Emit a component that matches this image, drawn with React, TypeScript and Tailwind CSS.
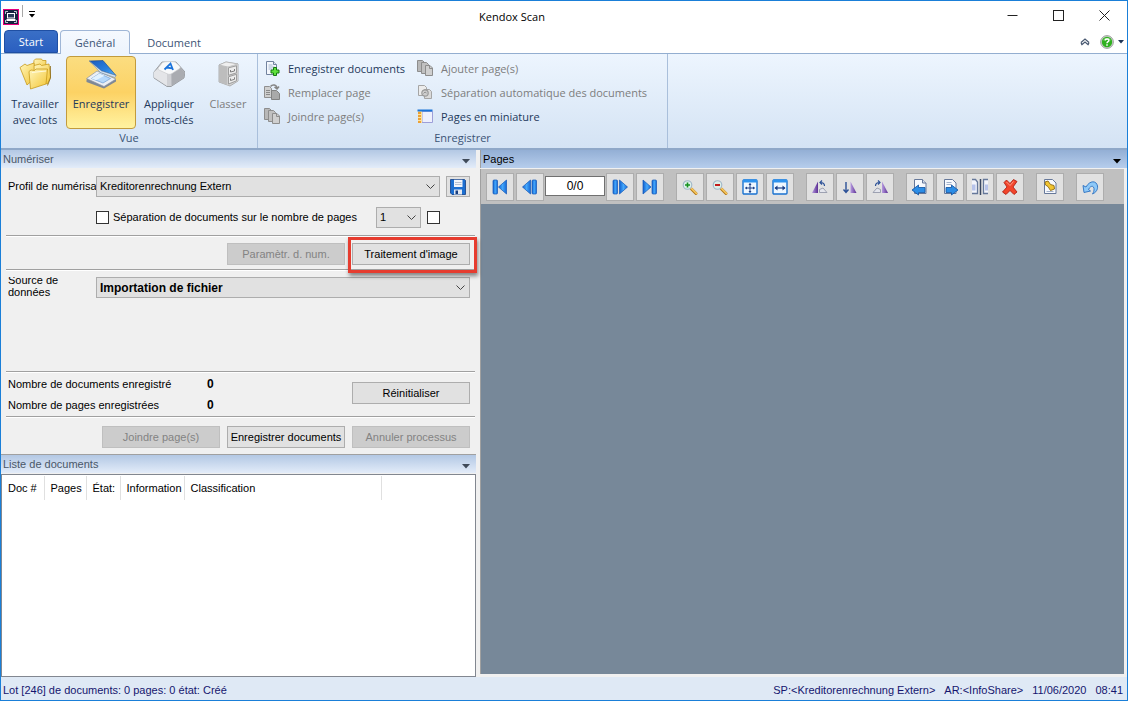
import type { ReactNode } from "react";

const RIBBON_FONT = "font-['Open_Sans',sans-serif]";
const BODY_FONT = "font-['Liberation_Sans',sans-serif]";

/* ---------- ribbon icons ---------- */

function AppIcon() {
  return (
    <svg width="16" height="16" viewBox="0 0 16 16" aria-hidden="true">
      <rect width="16" height="16" fill="#e6007e" />
      <rect x="1" y="1" width="14" height="14" fill="#14233f" />
      <path d="M2.500 5V2.500H5M11 2.500h2.500V5M2.500 11v2.500H5M13.500 11v2.500H11" fill="none" stroke="#e8edf5" strokeWidth="0.800" />
      <rect x="4.500" y="4.500" width="7" height="4.500" fill="#2b3c5c" stroke="#fff" />
      <path d="M3.500 11h9" stroke="#fff" strokeWidth="2" />
    </svg>
  );
}

function FoldersIcon() {
  return (
    <svg width="32" height="32" viewBox="0 0 32 32" aria-hidden="true">
      <defs>
        <linearGradient id="fold" x1="0" y1="0" x2="1" y2="1">
          <stop offset="0" stopColor="#fff6bd" />
          <stop offset="1" stopColor="#f3c534" />
        </linearGradient>
      </defs>
      <g stroke="#c89a1c" strokeWidth="0.800" strokeLinejoin="round">
        <path d="M15 2.500 16.500 1h6l1 1.500h3.500L26 18 14 16z" fill="url(#fold)" />
        <path d="M1 9.500 6 6l2 1.500 7-2.500 2 14-9 8z" fill="url(#fold)" />
        <path d="M15 7.500 21 6l1.500 1.500L30 6l1.500 13-3 7-13-3z" fill="url(#fold)" />
        <path d="M10 13.500 12 12l3.500.500L17 11h11.500l-1.500 15-15.500 5z" fill="url(#fold)" />
      </g>
      <path d="M13 14.500 27 13" stroke="#fffbe0" strokeWidth="1" />
      <path d="M31.500 8v12l-3 7.500" stroke="#8d6b15" strokeWidth="0.800" fill="none" />
    </svg>
  );
}

function ScannerIcon() {
  return (
    <svg width="32" height="32" viewBox="0 0 32 32" aria-hidden="true">
      <defs>
        <linearGradient id="lid" x1="0" y1="0" x2="1" y2="1">
          <stop offset="0" stopColor="#1d5cbd" />
          <stop offset="0.600" stopColor="#2a80de" />
          <stop offset="1" stopColor="#55b0f5" />
        </linearGradient>
      </defs>
      <path d="M1.500 21.500 14 14l17 7.500v2L19 30.500 1.500 24z" fill="#7e8896" />
      <path d="M1.500 20.500 12 13l19 8-12 7.500z" fill="#eceff4" stroke="#8b93a2" strokeWidth="0.700" />
      <path d="M6.500 20.500 14.500 15.500l11 5-7.500 4.500z" fill="#b5d8fb" stroke="#6d9dd4" strokeWidth="0.700" />
      <path d="M6.500 20.500 14.500 15.500l5 2.300-8.500 4.500z" fill="#e2f2ff" />
      <path d="M4.500 3 18 2.500 31 17.500 16.500 13z" fill="url(#lid)" stroke="#174389" strokeWidth="0.600" />
      <path d="M4.500 3 16.500 13 31 17.500l-1 2-14.500-5z" fill="#d8e6f5" stroke="#5d7eab" strokeWidth="0.500" />
    </svg>
  );
}

function KeyIcon() {
  return (
    <svg width="32" height="32" viewBox="0 0 32 32" aria-hidden="true">
      <path d="M9 4h14l9 10-1 6-13 8.500h-4L1 20v-6z" fill="#b9bbbf" stroke="#8d8f93" strokeWidth="0.800" strokeLinejoin="round" />
      <path d="M1 14 5.500 10 14 15.500V28L1 19.500z" fill="#e4e5e8" />
      <path d="M14 15.500h4.500L19 28h-5z" fill="#cfd0d4" />
      <path d="M18.500 15.500 26.500 9l5 5.500-1 5L18.500 28z" fill="#aaacb1" />
      <path d="M9.500 4.500C12 3.300 20 3.300 22.500 4.200L27 8.500c.6 1-.2 2-1 2.500l-7 4.500c-1.500 1-3.500 1-5 .2L6 12c-1-.6-1.200-1.500-.5-2.500z" fill="#f8f9fa" stroke="#c4c6ca" strokeWidth="0.600" />
      <path d="M11.500 11.500 17.500 5.500l2.500 6.500M13.800 9.500l5.200.8" fill="none" stroke="#1c74dc" strokeWidth="1.800" />
    </svg>
  );
}

function CabinetIcon() {
  return (
    <svg width="32" height="32" viewBox="0 0 32 32" aria-hidden="true">
      <path d="M7 7 14 4l12 2v17l-8 5-11-4z" fill="#d8d8d8" stroke="#a0a0a0" strokeWidth="0.800" />
      <path d="M7 7 14 4l12 2-10 3z" fill="#efefef" stroke="#ababab" strokeWidth="0.600" />
      <path d="M7 7l8 2v18l-8-3z" fill="#bdbdbd" />
      <path d="M15 9l11-3v17l-11 5z" fill="#cecece" />
      <path d="M16.500 9.800 24.500 7.800v7l-8 2.500zM16.500 18.800l8-2.500v6.500l-8 3.200z" fill="#ececec" stroke="#969696" strokeWidth="0.900" />
      <path d="M18.500 12v2l4-1v-2M18.500 20.500v2l4-1.200v-2" fill="none" stroke="#7f7f7f" />
    </svg>
  );
}

function DocAddIcon() {
  return (
    <svg width="16" height="16" viewBox="0 0 16 16" aria-hidden="true">
      <path d="M2.500 1.500h7l3 3v10h-10z" fill="#f4f7fc" stroke="#72839f" />
      <path d="M9.500 1.500v3h3" fill="#dde6f3" stroke="#72839f" />
      <path d="M4.500 5h4M4.500 7h6M4.500 9h4" stroke="#a5b6d0" />
      <path d="M9.500 7.500h3v2.500H15v3h-2.500v2.500h-3V13H7v-3h2.500z" fill="#5fe03c" stroke="#157a12" />
    </svg>
  );
}

function GreyPages() {
  return (
    <svg width="16" height="16" viewBox="0 0 16 16" aria-hidden="true">
      <g stroke="#8d8d8d">
        <path d="M.5.500h5l2 2v9h-7z" fill="#b8b8b8" />
        <path d="M4.500 2.500h5l2 2v9h-7z" fill="#c0c0c0" />
        <path d="M8.500 5.500h4.500l2.500 2.500v7.500H8.500z" fill="#cfcfcf" />
      </g>
      <path d="M12.500 6v2.500h2.500" fill="none" stroke="#8d8d8d" />
    </svg>
  );
}

function GreyReplace() {
  return (
    <svg width="16" height="16" viewBox="0 0 16 16" aria-hidden="true">
      <path d="M.5 2.500h5l2 2v9h-7z" fill="#cfcfcf" stroke="#8f8f8f" />
      <path d="M2 6.500h4M2 8.500h4M2 10.500h4" stroke="#8a8a8a" />
      <path d="M7.500 6.500h5l3 3v6h-8z" fill="#a9a9a9" stroke="#828282" />
      <path d="M6.500 2.500C8.500 0 12.500.500 13 4M15 2.500 13 5 10.500 3" fill="none" stroke="#858585" strokeWidth="1.500" />
    </svg>
  );
}

function GreySplit() {
  return (
    <svg width="16" height="16" viewBox="0 0 16 16" aria-hidden="true">
      <path d="M1.500 1.500h6l2 2v8h-8z" fill="#ececec" stroke="#a5a5a5" />
      <path d="M7.500 5.500h5l2 2v7h-7z" fill="#dadada" stroke="#a5a5a5" />
      <circle cx="8" cy="9" r="3.200" fill="#cfcfcf" stroke="#9a9a9a" strokeWidth="1.200" />
      <path d="M6.500 9.500 8 8l1.500 1" stroke="#909090" fill="none" />
    </svg>
  );
}

function ThumbsIcon() {
  return (
    <svg width="16" height="16" viewBox="0 0 16 16" aria-hidden="true">
      <path d="M5 3.500h10.500v11H5z" fill="#eef0fd" stroke="#9d9fd8" />
      <path d="M1 3h4v12H1z" fill="#ffe29a" />
      <path d="M1 5h3M1 8h3M1 11h3M1 14h3" stroke="#e58c17" strokeWidth="1.500" />
      <path d="M.5 2.500h15" stroke="#1b74d8" strokeWidth="2" />
    </svg>
  );
}

/* ---------- page toolbar icons ---------- */

function Glyph({ children }: { children: ReactNode }) {
  return (
    <svg width="18" height="18" viewBox="0 0 18 18" aria-hidden="true">
      <defs>
        <linearGradient id="nav" x1="0" y1="0" x2="1" y2="0">
          <stop offset="0" stopColor="#1060cf" />
          <stop offset="0.500" stopColor="#45a8fb" />
          <stop offset="1" stopColor="#1468d6" />
        </linearGradient>
        <linearGradient id="tri" x1="0" y1="0" x2="1" y2="0">
          <stop offset="0" stopColor="#b79be0" />
          <stop offset="1" stopColor="#5b2f93" />
        </linearGradient>
      </defs>
      {children}
    </svg>
  );
}

const navProps = { fill: "url(#nav)", stroke: "#1257b8", strokeWidth: 0.7 };

const FirstIcon = () => (
  <Glyph>
    <rect x="2" y="2" width="4.500" height="14" rx="1" {...navProps} />
    <path d="M15.500 2v14L7.500 9z" {...navProps} />
  </Glyph>
);
const PrevIcon = () => (
  <Glyph>
    <path d="M9.500 2v14L1.500 9z" {...navProps} />
    <rect x="11" y="2" width="4.500" height="14" rx="1" {...navProps} />
  </Glyph>
);
const NextIcon = () => (
  <Glyph>
    <rect x="2" y="2" width="4.500" height="14" rx="1" {...navProps} />
    <path d="M8.500 2v14l8-7z" {...navProps} />
  </Glyph>
);
const LastIcon = () => (
  <Glyph>
    <path d="M2 2v14l8-7z" {...navProps} />
    <rect x="11" y="2" width="4.500" height="14" rx="1" {...navProps} />
  </Glyph>
);

const Lens = ({ children }: { children: ReactNode }) => (
  <Glyph>
    <path d="M10.500 11l4.500 4.500" stroke="#b37a1c" strokeWidth="3" strokeLinecap="round" />
    <path d="M10.500 10.500l5 5" stroke="#f8c860" strokeWidth="1.700" strokeLinecap="round" />
    <circle cx="6.500" cy="7" r="4.300" fill="#dcefe9" stroke="#9fb6c9" strokeWidth="1.100" />
    {children}
  </Glyph>
);
const ZoomInIcon = () => (
  <Lens>
    <path d="M4 7h5M6.500 4.500v5" stroke="#169322" strokeWidth="1.600" />
  </Lens>
);
const ZoomOutIcon = () => (
  <Lens>
    <path d="M4 7h5" stroke="#c21d1d" strokeWidth="2" />
  </Lens>
);

const Frame = ({ children }: { children: ReactNode }) => (
  <Glyph>
    <rect x="2" y="2" width="14" height="14" rx="1" fill="#eef7ff" stroke="#1a72cf" strokeWidth="1.400" />
    <rect x="2" y="1.500" width="14" height="3" fill="#2e93ee" />
    {children}
  </Glyph>
);
const FitPageIcon = () => (
  <Frame>
    <path d="M9 5.500v9M4.500 10h9" stroke="#1c3f86" />
    <path d="M7.500 7 9 5l1.500 2zM7.500 13 9 15l1.500-2zM6 8.500 4 10l2 1.500zM12 8.500l2 1.500-2 1.500z" fill="#1c3f86" />
  </Frame>
);
const FitWidthIcon = () => (
  <Frame>
    <path d="M4 10h10" stroke="#1c3f86" strokeWidth="1.200" />
    <path d="M6.500 7.500 3.500 10l3 2.500zM11.500 7.500l3 2.500-3 2.500z" fill="#1c3f86" />
  </Frame>
);

const RotateLeftIcon = () => (
  <Glyph>
    <path d="M7 3.500V15H1z" fill="url(#tri)" />
    <path d="M8.500 11.500 12 10l4 4.500H8.500z" fill="#e3e5ec" stroke="#8b91a3" strokeWidth="0.800" />
    <path d="M13.500 8c0-2.500-1-3.500-4-3.500M11 2.500 9 4.500l2 2" fill="none" stroke="#2c5197" strokeWidth="1.200" />
  </Glyph>
);
const FlipIcon = () => (
  <Glyph>
    <path d="M5 4v10M2.500 11.500 5 14.500l2.500-3" fill="none" stroke="#2c5197" strokeWidth="1.400" />
    <path d="M9.500 3.500V15h6z" fill="url(#tri)" />
  </Glyph>
);
const RotateRightIcon = () => (
  <Glyph>
    <path d="M11 3.500V15h6z" fill="url(#tri)" />
    <path d="M9.500 11.500 6 10l-4 4.500h7.500z" fill="#e3e5ec" stroke="#8b91a3" strokeWidth="0.800" />
    <path d="M4.500 8c0-2.500 1-3.500 4-3.500M7 2.500l2 2-2 2" fill="none" stroke="#2c5197" strokeWidth="1.200" />
  </Glyph>
);

const Sheet = () => (
  <path d="M3.500 1.500h8l3.500 3.500v10.500H3.500z" fill="#f7f9fd" stroke="#66789a" strokeWidth="1" />
);
const PageBackIcon = () => (
  <Glyph>
    <Sheet />
    <path d="M11.500 1.500V5H15" fill="#d5deed" stroke="#66789a" />
    <path d="M1 12 7.500 7v2.500H14v5H7.500V17z" fill="#2c8de6" stroke="#0f519f" strokeWidth="0.800" />
  </Glyph>
);
const PageForwardIcon = () => (
  <Glyph>
    <Sheet />
    <path d="M5.500 4.500h5M5.500 6.500h5" stroke="#a2b1ca" />
    <path d="M17 12 10.500 7v2.500H5v5h5.500V17z" fill="#2c8de6" stroke="#0f519f" strokeWidth="0.800" />
  </Glyph>
);
const SplitPageIcon = () => (
  <Glyph>
    <path d="M1 1.500h3.500l2 2.500v11.500H1M17 1.500h-4.500v14H17" fill="#f3f5fb" stroke="#66789a" strokeWidth="1.300" />
    <path d="M9.500 1v16" stroke="#3a4863" strokeWidth="1.500" />
    <path d="M1 6.500h3.500v6H1zM14 6.500h3v6h-3z" fill="#b7c3ea" />
  </Glyph>
);
const DeleteIcon = () => (
  <Glyph>
    <path d="M3 4.500 5.500 2 9 5.500 12.500 1.500l3.500 2L12 9l4 5-3 2.500L9 12.500 5 16.500 1.500 14 6 9z" fill="#f2452c" stroke="#a81508" strokeWidth="0.800" strokeLinejoin="round" />
    <path d="M5.500 4 9 7.500l3.500-4" fill="none" stroke="#ff9c85" />
  </Glyph>
);
const StampIcon = () => (
  <Glyph>
    <Sheet />
    <path d="M5.500 13.500h7" stroke="#a2b1ca" />
    <path d="M4 4 7 3l2.500 3.500L13 7.500 13.500 11l-4 1.500L7 8.500 4.500 7z" fill="#f2c531" stroke="#8f6a10" strokeWidth="0.900" />
  </Glyph>
);
const UndoIcon = () => (
  <Glyph>
    <path d="M2 7.500 3 14.500l6.500-1.500-2-1.500c1.500-3.500 5-4.500 5.500-1 .3 2-.5 4-1.500 5.500 3.500-1.500 5.500-4.500 5-8C15.500 2.500 9 2 5 9z" fill="#8ec9f8" stroke="#2a6fc0" strokeWidth="0.900" strokeLinejoin="round" />
  </Glyph>
);

function FloppyIcon() {
  return (
    <svg width="16" height="16" viewBox="0 0 16 16" aria-hidden="true">
      <path d="M.5.500h14l1 1v14H2l-1.500-1.500z" fill="#1c6fd1" stroke="#123f86" strokeWidth="0.800" />
      <path d="M4 .8h8.500V8H4z" fill="#f2f5fa" />
      <path d="M5 3.500h6.500M5 5.500h6.500" stroke="#a8b4c8" strokeWidth="0.800" />
      <path d="M4 10.500h8v5H4z" fill="#e3e8f0" />
      <path d="M5.500 11.500H8v3.500H5.500z" fill="#173e80" />
    </svg>
  );
}

/* ---------- building blocks ---------- */

function RibbonButton({ icon, lines, active, disabled, width }: { icon: ReactNode; lines: string[]; active?: boolean; disabled?: boolean; width: string }) {
  const state = active
    ? "border-[#c29b3d] bg-linear-to-b from-[#fbdd80] via-[#fcd264] to-[#fff3a0] text-[#1e395b]"
    : disabled
      ? "border-transparent text-[#7d7d7d]"
      : "border-transparent text-[#1e395b]";
  return (
    <button type="button" disabled={disabled} className={`flex h-[73px] shrink-0 flex-col items-center rounded-sm border pt-px leading-4 ${width} ${state}`}>
      {icon}
      <span className="mt-1.5 whitespace-nowrap">
        {lines.map((line) => (
          <span key={line} className="block text-center">{line}</span>
        ))}
      </span>
    </button>
  );
}

function RibbonCommand({ icon, label, disabled }: { icon: ReactNode; label: string; disabled?: boolean }) {
  return (
    <button type="button" disabled={disabled} className={`flex h-6 items-center gap-2 whitespace-nowrap ${disabled ? "text-[#7d7d7d]" : "text-[#1e395b]"}`}>
      {icon}
      {label}
    </button>
  );
}

function ToolButton({ label, children }: { label: string; children: ReactNode }) {
  return (
    <button type="button" aria-label={label} className="grid size-7 shrink-0 place-items-center border border-[#adadad] bg-[#e1e1e1]">
      {children}
    </button>
  );
}

function PushButton({ children, disabled, highlighted }: { children: ReactNode; disabled?: boolean; highlighted?: boolean }) {
  return (
    <span className="relative">
      <button
        type="button"
        disabled={disabled}
        className={`h-[22px] w-[118px] border whitespace-nowrap ${disabled ? "border-[#bfbfbf] bg-[#cccccc] text-[#838383]" : "border-[#adadad] bg-[#e1e1e1] text-black"}`}
      >
        {children}
      </button>
      {highlighted && (
        <span className="pointer-events-none absolute -top-1.5 -right-[7px] -bottom-2 -left-1 z-10 border-[3px] border-[#e63c2f] shadow-[1px_3px_4px_rgba(0,0,0,0.45)]" />
      )}
    </span>
  );
}

function Combo({ id, label, value, className, bold }: { id: string; label?: string; value: string; className: string; bold?: boolean }) {
  return (
    <span className={`relative flex h-[21px] ${className}`}>
      <select id={id} aria-label={label} className={`h-full w-full appearance-none border border-[#adadad] bg-[#e1e1e1] pl-[3px] text-black ${bold ? "text-xs font-bold" : "text-[11px]"}`}>
        <option>{value}</option>
      </select>
      <svg className="pointer-events-none absolute top-2 right-[5px]" width="9" height="6" viewBox="0 0 9 6" aria-hidden="true">
        <path d="M.5.500l4 4 4-4" fill="none" stroke="#444" />
      </svg>
    </span>
  );
}

function Tick({ id, label }: { id: string; label?: string }) {
  return <input id={id} aria-label={label} type="checkbox" className="size-[13px] shrink-0 appearance-none border border-[#333] bg-white checked:bg-[#333]" />;
}

function Arrow({ color }: { color: string }) {
  return (
    <svg width="8" height="5" viewBox="0 0 8 5" aria-hidden="true">
      <path d="M0 0h8L4 4.500z" fill={color} />
    </svg>
  );
}

function PaneTitle({ title, active }: { title: string; active?: boolean }) {
  return (
    <div className={`flex h-[18px] shrink-0 items-center justify-between bg-linear-to-b pr-[6px] pl-0.5 ${active ? "from-[#93afd5] to-[#b6cdec] text-black" : "from-[#b3c8e4] to-[#e3ecf9] text-[#4a5768]"}`}>
      <h2>{title}</h2>
      <button type="button" aria-label={`Menu ${title}`} className="pt-1">
        <Arrow color={active ? "#000" : "#3f4a59"} />
      </button>
    </div>
  );
}

const Rule = () => <div className="mr-px ml-[5px] h-0.5 border-t border-[#a0a0a0] bg-white" />;

const columns = [
  { name: "Doc #", width: "w-[42px]" },
  { name: "Pages", width: "w-[42px]" },
  { name: "État:", width: "w-[34px]" },
  { name: "Information", width: "w-[64px]" },
  { name: "Classification", width: "w-[197px]" },
];

/* ---------- page ---------- */

export default function App() {
  return (
    <div className={`flex min-h-screen flex-col border border-[#1a7fd8] bg-white text-[11px] leading-[13px] text-black ${BODY_FONT}`}>
      <header className={`flex h-[29px] shrink-0 items-start ${RIBBON_FONT}`}>
        <div className="flex items-start pt-2 pl-0.5">
          <AppIcon />
          <span className="-mt-1 ml-[3px] h-3 border-l border-[#a8a8a8]" />
          <button type="button" aria-label="Personnaliser la barre d'accès rapide" className="ml-1.5 pt-0.5">
            <svg width="6" height="7" viewBox="0 0 6 7" aria-hidden="true">
              <path d="M0 .5h6" stroke="#000" />
              <path d="M0 3h6L3 6.500z" fill="#000" />
            </svg>
          </button>
        </div>
        <h1 className="flex-1 self-center pt-0.5 text-center">Kendox Scan</h1>
        <div className="flex h-[28px] text-[#222]">
          <button type="button" aria-label="Réduire" className="grid w-[46px] place-items-center">
            <svg width="11" height="11" viewBox="0 0 11 11"><path d="M.5 5.500h10" stroke="currentColor" /></svg>
          </button>
          <button type="button" aria-label="Agrandir" className="grid w-[46px] place-items-center">
            <svg width="11" height="11" viewBox="0 0 11 11"><rect x=".5" y=".5" width="10" height="10" fill="none" stroke="currentColor" /></svg>
          </button>
          <button type="button" aria-label="Fermer" className="grid w-[46px] place-items-center">
            <svg width="11" height="11" viewBox="0 0 11 11"><path d="M.5.500l10 10M10.500.500l-10 10" stroke="currentColor" /></svg>
          </button>
        </div>
      </header>

      <nav className={`flex h-[23px] shrink-0 items-stretch pl-[3px] text-[#3c5475] ${RIBBON_FONT}`}>
        <button type="button" className="w-[54px] rounded-t-sm border border-[#1f4fa3] bg-linear-to-b from-[#3a6fc6] to-[#2a5fc0] text-white">Start</button>
        <button type="button" className="relative z-10 -mb-px ml-0.5 w-[70px] rounded-t-sm border border-b-0 border-[#9fb6d6] bg-linear-to-b from-[#f5f9fe] to-[#edf4fd]">Général</button>
        <button type="button" className="ml-2 w-[72px] pt-0.5">Document</button>
        <div className="ml-auto flex items-center gap-1 pr-[3px]">
          <button type="button" aria-label="Réduire le ruban" className="mr-1.5">
            <svg width="10" height="8" viewBox="0 0 10 8" aria-hidden="true">
              <path d="M1 4.500 5 1l4 3.500M1.500 7 5 4l3.500 3M1 4.500 2 7M9 4.500 8 7" fill="none" stroke="#4a5a72" strokeWidth="1.200" />
            </svg>
          </button>
          <button type="button" aria-label="Aide">
            <svg width="14" height="14" viewBox="0 0 14 14" aria-hidden="true">
              <circle cx="7" cy="7" r="6.400" fill="#cfd3cf" stroke="#8a918a" strokeWidth="0.800" />
              <circle cx="7" cy="7" r="5.200" fill="#2fb01f" />
              <path d="M3.500 5a4 3 0 0 1 7 0" stroke="#8fe07f" fill="none" />
              <path d="M5.200 5.500C5.200 3.300 9 3.400 8.900 5.500 8.800 6.900 7 6.600 7 8.300M7 9.300v1.500" stroke="#fff" strokeWidth="1.500" fill="none" />
            </svg>
          </button>
          <button type="button" aria-label="Options d'aide">
            <svg width="6" height="4" viewBox="0 0 6 4" aria-hidden="true"><path d="M0 0h6L3 3.500z" fill="#1f3557" /></svg>
          </button>
        </div>
      </nav>

      <section className={`flex h-[97px] shrink-0 border-t border-b-2 border-t-[#93aed0] border-b-[#8fa8c8] bg-linear-to-b from-[#edf5fe] to-[#d4e3f4] ${RIBBON_FONT}`}>
        <div className="flex w-[257px] shrink-0 flex-col border-r border-[#a9bfdb] pt-0.5">
          <div className="flex pl-[3px]">
            <RibbonButton width="w-[62px]" icon={<FoldersIcon />} lines={["Travailler", "avec lots"]} />
            <RibbonButton width="w-[70px]" active icon={<ScannerIcon />} lines={["Enregistrer"]} />
            <RibbonButton width="w-[66px]" icon={<KeyIcon />} lines={["Appliquer", "mots-clés"]} />
            <RibbonButton width="w-[52px]" disabled icon={<CabinetIcon />} lines={["Classer"]} />
          </div>
          <div className="text-center leading-[18px] text-[#3c5475]">Vue</div>
        </div>
        <div className="shrink-0 border-r border-[#a9bfdb] pt-0.5">
          <div className="flex h-[73px] gap-2 pr-5 pl-1.5">
            <div className="w-[145px]">
              <RibbonCommand icon={<DocAddIcon />} label="Enregistrer documents" />
              <RibbonCommand icon={<GreyReplace />} label="Remplacer page" disabled />
              <RibbonCommand icon={<GreyPages />} label="Joindre page(s)" disabled />
            </div>
            <div>
              <RibbonCommand icon={<GreyPages />} label="Ajouter page(s)" disabled />
              <RibbonCommand icon={<GreySplit />} label="Séparation automatique des documents" disabled />
              <RibbonCommand icon={<ThumbsIcon />} label="Pages en miniature" />
            </div>
          </div>
          <div className="text-center leading-[18px] text-[#3c5475]">Enregistrer</div>
        </div>
      </section>

      <main className="grid flex-1 grid-cols-[475fr_651fr] bg-[#f0f0f0]">
        <div className="flex min-w-0 flex-col">
          <PaneTitle title="Numériser" />
          <div className="pt-2">
            <div className="flex items-center pr-1.5 pl-[7px]">
              <label htmlFor="profile" className="w-[88px] shrink-0 overflow-hidden whitespace-nowrap">Profil de numérisa</label>
              <Combo id="profile" value="Kreditorenrechnung Extern" className="flex-1" />
              <button type="button" aria-label="Enregistrer le profil" className="ml-1.5 grid h-[21px] w-[24px] place-items-center border border-[#adadad] bg-[#e1e1e1]">
                <FloppyIcon />
              </button>
            </div>
            <div className="mt-2.5 flex items-center pl-[95px]">
              <Tick id="split" />
              <label htmlFor="split" className="ml-1 w-[263px] whitespace-nowrap">Séparation de documents sur le nombre de pages</label>
              <Combo id="count" label="Nombre de pages" value="1" className="w-[45px]" />
              <span className="ml-1.5 flex"><Tick id="extra" label="Option" /></span>
            </div>
            <div className="mt-[7px]"><Rule /></div>
            <div className="mt-1.5 flex justify-end gap-[7px] pr-1.5">
              <PushButton disabled>Paramètr. d. num.</PushButton>
              <PushButton highlighted>Traitement d'image</PushButton>
            </div>
            <div className="mt-1"><Rule /></div>
            <div className="mt-1.5 flex h-[94px] items-start pr-1.5 pl-[7px]">
              <label htmlFor="source" className="flex h-[21px] w-[88px] shrink-0 items-end overflow-hidden pr-8 leading-3">Source de données</label>
              <Combo id="source" value="Importation de fichier" bold className="flex-1" />
            </div>
            <Rule />
            <div className="flex justify-between pt-px pr-1.5 pl-[7px]">
              <dl className="grid grid-cols-[199px_auto] leading-[21px]">
                <dt>Nombre de documents enregistré</dt>
                <dd className="text-xs leading-[21px] font-bold">0</dd>
                <dt>Nombre de pages enregistrées</dt>
                <dd className="text-xs leading-[21px] font-bold">0</dd>
              </dl>
              <div className="pt-2"><PushButton>Réinitialiser</PushButton></div>
            </div>
            <Rule />
            <div className="mt-2 flex justify-end gap-[7px] pr-1.5 pb-1.5">
              <PushButton disabled>Joindre page(s)</PushButton>
              <PushButton>Enregistrer documents</PushButton>
              <PushButton disabled>Annuler processus</PushButton>
            </div>
          </div>
          <div className="border-t border-[#a0a0a0]">
            <PaneTitle title="Liste de documents" />
          </div>
          <div className="mt-px flex-1 border border-[#828790] bg-white pt-px">
            <table className="table-fixed border-collapse">
              <thead>
                <tr className="h-6">
                  {columns.map((c) => (
                    <th key={c.name} scope="col" className={`border-r border-[#e0e0e0] pl-1.5 text-left font-normal whitespace-nowrap ${c.width}`}>{c.name}</th>
                  ))}
                </tr>
              </thead>
              <tbody />
            </table>
          </div>
        </div>

        <div className="flex min-w-0 flex-col pl-1">
          <div className="border-l border-[#a0a0a0]">
            <PaneTitle title="Pages" active />
          </div>
          <div className="mt-px mr-[3px] mb-[3px] flex flex-1 flex-col border-l border-[#a0a0a0]">
            <div className="flex h-[35px] shrink-0 items-center gap-3 bg-[#c0c0c0] pl-[5px]">
              <div className="flex items-center gap-0.5">
                <ToolButton label="Première page"><FirstIcon /></ToolButton>
                <ToolButton label="Page précédente"><PrevIcon /></ToolButton>
                <input aria-label="Page" defaultValue="0/0" className="-mx-px mb-0.5 h-5 w-[60px] border border-[#707070] bg-white text-center text-xs" />
                <ToolButton label="Page suivante"><NextIcon /></ToolButton>
                <ToolButton label="Dernière page"><LastIcon /></ToolButton>
              </div>
              <div className="flex gap-0.5">
                <ToolButton label="Zoom avant"><ZoomInIcon /></ToolButton>
                <ToolButton label="Zoom arrière"><ZoomOutIcon /></ToolButton>
                <ToolButton label="Page entière"><FitPageIcon /></ToolButton>
                <ToolButton label="Largeur de page"><FitWidthIcon /></ToolButton>
              </div>
              <div className="flex gap-0.5">
                <ToolButton label="Rotation à gauche"><RotateLeftIcon /></ToolButton>
                <ToolButton label="Retourner"><FlipIcon /></ToolButton>
                <ToolButton label="Rotation à droite"><RotateRightIcon /></ToolButton>
              </div>
              <div className="flex gap-0.5">
                <ToolButton label="Déplacer avant"><PageBackIcon /></ToolButton>
                <ToolButton label="Déplacer après"><PageForwardIcon /></ToolButton>
                <ToolButton label="Séparer"><SplitPageIcon /></ToolButton>
                <ToolButton label="Supprimer"><DeleteIcon /></ToolButton>
              </div>
              <ToolButton label="Tampon"><StampIcon /></ToolButton>
              <ToolButton label="Annuler"><UndoIcon /></ToolButton>
            </div>
            <div className="flex-1 bg-[#778899]" />
          </div>
        </div>
      </main>

      <footer className="flex h-[23px] shrink-0 items-center justify-between bg-[#dfe9f5] pt-[3px] pr-1 pl-0.5 text-[#15156e]">
        <span>Lot [246] de documents: 0 pages: 0 état: Créé</span>
        <span className="flex gap-[9px]">
          <span>SP:&lt;Kreditorenrechnung Extern&gt;</span>
          <span>AR:&lt;InfoShare&gt;</span>
          <span>11/06/2020</span>
          <span>08:41</span>
        </span>
      </footer>
    </div>
  );
}
